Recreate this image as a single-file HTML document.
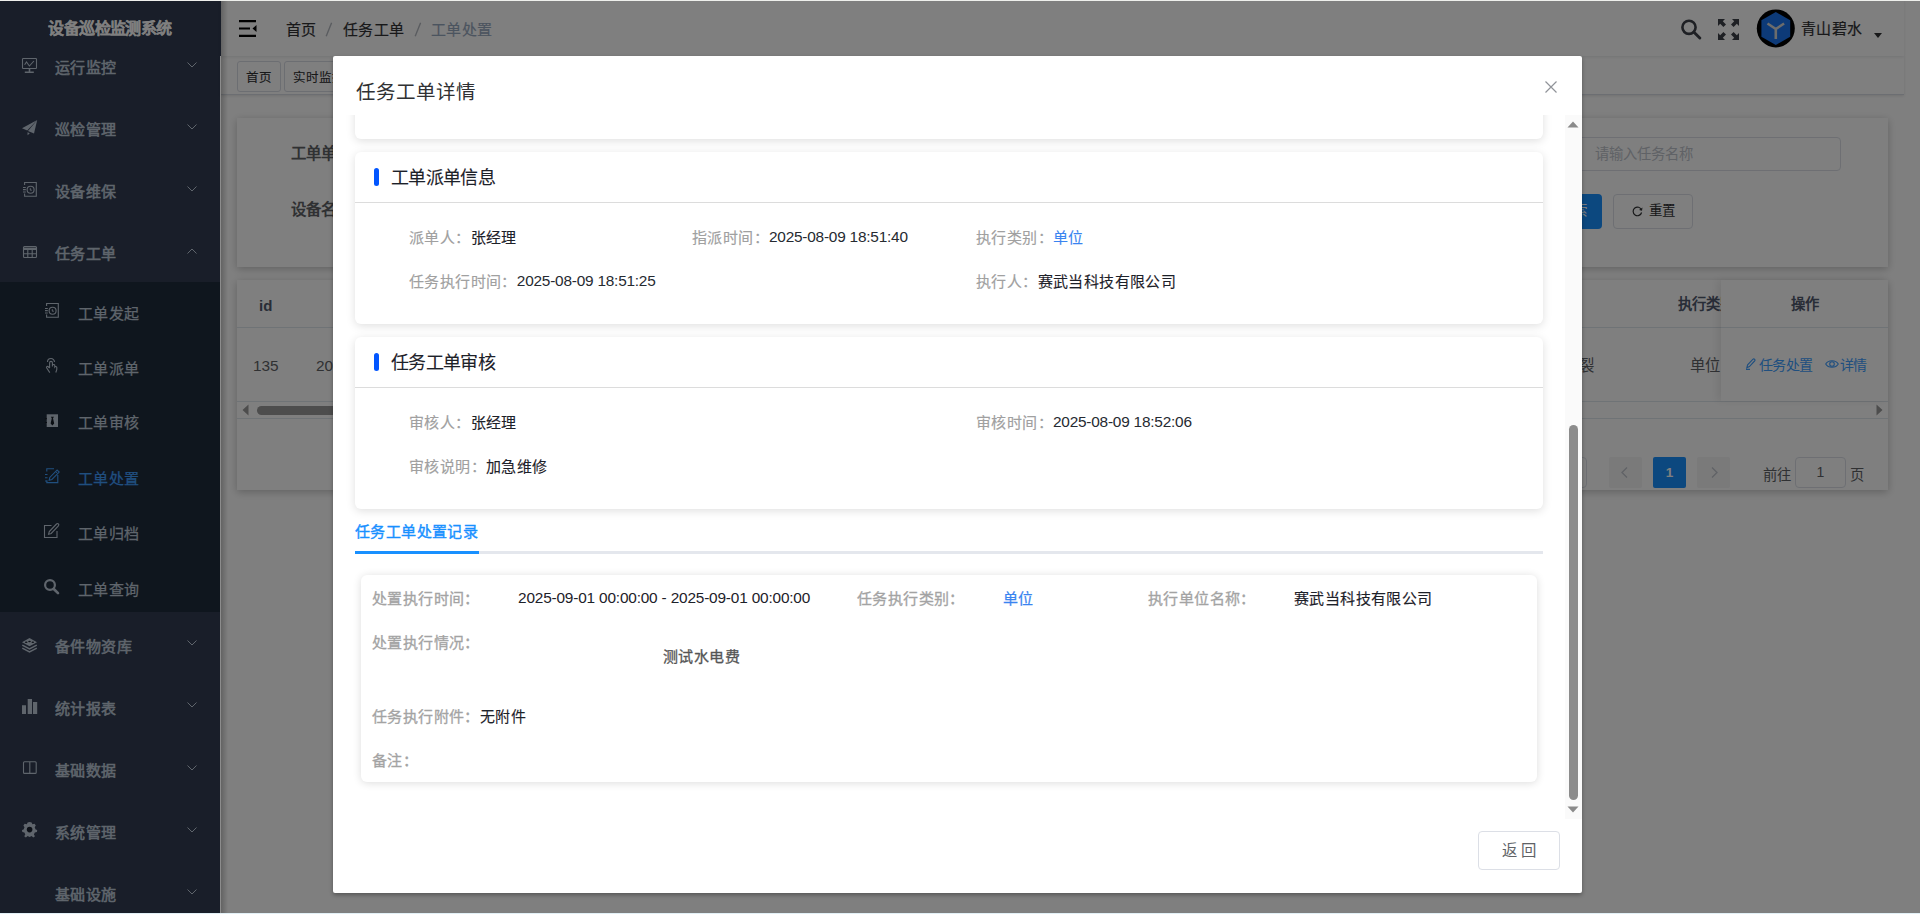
<!DOCTYPE html>
<html lang="zh-CN"><head><meta charset="utf-8">
<style>
*{box-sizing:border-box;margin:0;padding:0}
html,body{width:1920px;height:914px;overflow:hidden}
body{position:relative;font-family:"Liberation Sans",sans-serif;background:#eef0ee;color:#303133}
.abs{position:absolute;white-space:nowrap}
#app{position:absolute;z-index:0;left:0;top:0;width:1920px;height:914px;background:#fff;overflow:hidden}
/* sidebar */
#side{position:absolute;left:0;top:0;width:220px;height:914px;background:#323c52}
.mt{font-size:15px;letter-spacing:0.4px;line-height:22px;color:#bfcbd9;-webkit-text-stroke:0.55px #bfcbd9}
.st{font-size:15px;letter-spacing:0.4px;line-height:22px;color:#bfcbd9;-webkit-text-stroke:0.25px #bfcbd9}
.st.act{color:#409eff;-webkit-text-stroke:0.25px #409eff}
#side .t{position:absolute;left:0;width:220px;text-align:center;color:#fff;font-weight:bold;font-size:15.4px;line-height:20px}
.mi{position:absolute;left:0;width:220px;height:62px}
.mi .tx{position:absolute;left:55px;top:0;line-height:62px;font-size:15.4px;font-weight:bold;color:#fdfdfd;opacity:.5}
.mi svg.ic{position:absolute;left:21px}
.mi .ch{position:absolute;left:187px;top:28px;width:10px;height:6px}
#sub{position:absolute;left:0;top:282px;width:220px;height:330px;background:#1f2c3c}
.si{position:absolute;left:0;width:220px;height:55px}
.si .tx{position:absolute;left:78px;top:0;line-height:55px;font-size:15.4px;color:#fdfdfd;opacity:.5}
.si svg{position:absolute;left:45px}
/* header */
#hdr{position:absolute;left:221px;top:0;width:1683px;height:56px;background:#fff;box-shadow:0 1px 3px rgba(0,21,41,.1);z-index:2}
.bc{font-size:15px;letter-spacing:0.4px;line-height:22px;color:#303133;-webkit-text-stroke:0.2px currentColor}
.bc.sep{color:#b8bcc4;font-size:16px;letter-spacing:0;font-weight:bold;-webkit-text-stroke:0}
#tags{position:absolute;left:221px;top:56px;width:1683px;height:39px;background:#fff;border-bottom:1px solid #d8dce5;box-shadow:0 1px 3px rgba(0,0,0,.12)}
.tag{position:absolute;top:5px;height:31px;padding-top:2px !important;border:1px solid #d8dce5;border-radius:3px;font-size:12.5px;line-height:29px;color:#303133;padding:0 8px;background:#fff;-webkit-text-stroke:0.1px #303133}
.card{position:absolute;background:#fff;box-shadow:0 2px 8px rgba(0,0,0,.24)}
.flb{font-size:15.4px;font-weight:bold;color:#606266;line-height:20px}
.th{font-size:14.3px;font-weight:bold;color:#515a6e;line-height:20px}
.td{font-size:15.4px;color:#606266;line-height:22px}
.lk{font-size:14px;letter-spacing:-0.5px;color:#409eff;line-height:22px}
.pg{position:absolute;width:33px;height:31px;background:#f4f4f5;border-radius:2px}
#ov{position:absolute;left:0;top:0;width:1920px;height:914px;background:rgba(0,0,0,.5)}
/* modal */
#modal{position:absolute;left:333px;top:56px;width:1249px;height:837px;background:#fff;border-radius:2px;box-shadow:0 2px 4px rgba(0,0,0,.32)}
#mtitle{position:absolute;left:23px;top:22px;font-size:19.5px;line-height:28px;color:#303133}
#scroll{position:absolute;left:0;top:59px;width:1249px;height:704px;overflow:hidden}
.mc{position:absolute;left:22px;width:1188px;background:#fff;border-radius:6px;box-shadow:0 2px 10px rgba(0,0,0,.13)}
.mc .hd{position:absolute;left:0;top:0;width:100%;height:51px;border-bottom:1px solid #dcdcdc}
.mc .bar{position:absolute;left:19px;top:16px;width:5px;height:18px;border-radius:2.5px;background:#0256ff}
.mc .ht{position:absolute;left:36px;top:13px;font-size:18px;letter-spacing:-0.7px;line-height:26px;color:#1d2129;-webkit-text-stroke:0.1px #1d2129}
.lb{position:absolute;font-size:15px;letter-spacing:0.4px;line-height:22px;color:#a0a0a0;white-space:nowrap;-webkit-text-stroke:0.15px currentColor}
.vl{position:absolute;font-size:15px;letter-spacing:0.4px;line-height:22px;color:#1d2129;white-space:nowrap}
.blue{color:#3a84f0}
.vl0{color:#1d2129;-webkit-text-stroke:0.12px #1d2129}
.vl0.blue{color:#3a84f0;-webkit-text-stroke:0.1px #3a84f0}
.num{-webkit-text-stroke:0 !important;color:#262a31 !important}
.num{font-size:15.4px;letter-spacing:-0.22px;position:relative;top:-1px}
</style></head><body>
<div id="app">
 <div id="side">
  <div class="abs" style="left:0;top:18px;width:220px;text-align:center;color:#fff;font-weight:bold;font-size:16px;letter-spacing:-0.6px;line-height:22px;-webkit-text-stroke:0.1px #fff">设备巡检监测系统</div>
  <div id="sub"></div>

  <svg class="abs" style="left:0;top:0;overflow:visible" width="220" height="914" fill="none" stroke="#bfcbd9" stroke-width="1.1">
   <rect x="22.5" y="58.5" width="14" height="10" rx="0.8"/>
   <path d="M29.5 68.5V71.5M24.8 72.3H33.8" stroke-width="1.6"/>
   <path d="M24.6 64.8 L26.5 62 L29.4 66 L33.9 61"/>
   <path d="M37.2 120 L22 128.3 L27.2 130.5 Z" fill="#bfcbd9" stroke="none"/>
   <path d="M37.2 120 L28 131 L34 133.5 Z" fill="#bfcbd9" stroke="none"/>
   <path d="M27.5 132.2 L29.8 133.2 L27.6 135.2 Z" fill="#bfcbd9" stroke="none"/>
   <path d="M24.6 185V182.5H36.3V196.3H24.6V193.5 M23 187.5H25.8M23 189.6H25.8M23 192H25.8"/>
   <circle cx="30.6" cy="189.8" r="3.5"/><path d="M30.3 188.2V190.2H31.8" stroke-width="1"/>
   <rect x="23.5" y="246.5" width="13" height="11" rx="1"/>
   <path d="M23.5 248.8H36.5" stroke-width="2.4"/>
   <path d="M27.8 250V257.5M32.2 250V257.5M23.5 253.8H36.5"/>
  </svg>
  <svg class="abs" style="left:0;top:0;overflow:visible" width="220" height="914" fill="none" stroke="#bfcbd9" stroke-width="1.1">
   <path d="M46.6 306V303.5H58.3V317.3H46.6V314.5 M45 308.5H47.8M45 310.6H47.8M45 313H47.8"/>
   <circle cx="52.6" cy="310.8" r="3.5"/><path d="M52.3 309.2V311.2H53.8" stroke-width="1"/>
   <path d="M47.5 362 A3.5 3.5 0 0 1 54.5 362" />
   <path d="M49.6 368V362.8A1.4 1.4 0 0 1 52.4 362.8V366.5 M52.4 365.5 A1.2 1.2 0 0 1 54.8 365.8V367 A1.1 1.1 0 0 1 56.8 367.4V369.5 L55.8 372.5 M49.6 368 L48 366.5 A1 1 0 0 0 46.6 367.8 L49.8 372.6"/>
   <rect x="46.7" y="414.3" width="11.3" height="12.7" fill="#bfcbd9" stroke="none"/>
   <path d="M44.8 418.7H47M44.8 422.5H47" stroke="#151c26" stroke-width="1"/>
   <path d="M50.8 416.8H54L53 418.3L54.2 423.5L52.4 425.5L50.6 423.5L51.8 418.3Z" fill="#151c26" stroke="none"/>
   <path d="M46.8 471.5V468.8H54 M46.8 480.5V482.6H57.8V475" stroke="#409eff"/>
   <path d="M45 474.5H47.5M45 477.8H47.5M45 481H47.5" stroke="#409eff"/>
   <path d="M49.2 480.2 L49.8 477.4 L57.1 470 L59.2 472.1 L51.9 479.5 Z" stroke="#409eff" stroke-width="1.1"/><path d="M55.6 471.5 L57.7 473.6" stroke="#409eff" stroke-width="1"/>
   <path d="M51.5 525.5H44.5V537.5H57V531"/>
   <path d="M48.6 534.2 L49.3 531.5 L56.5 524 A1.3 1.3 0 0 1 58.4 525.9 L51.2 533.5 Z"/>
   <circle cx="50" cy="585" r="4.9" stroke-width="2.2"/>
   <path d="M53.8 589 L58 593.2" stroke-width="2.6" stroke-linecap="round"/>
   <path d="M29.5 638 L37 642.2 L29.5 646.2 L22 642.2 Z" fill="#bfcbd9" stroke="none"/>
   <path d="M22.3 645.2 L29.5 649 L36.8 645.2 M22.3 648.2 L29.5 651.8 L36.8 648.2" stroke-width="1.5"/>
   <ellipse cx="29.5" cy="641.5" rx="1.3" ry="0.8" fill="#1b2230" stroke="none"/>
   <ellipse cx="26.2" cy="642.2" rx="1.3" ry="0.7" fill="#1b2230" stroke="none"/>
   <ellipse cx="32.8" cy="642.2" rx="1.3" ry="0.7" fill="#1b2230" stroke="none"/>
   <path d="M22 705.3H26V714H22Z M27.7 699H32V714H27.7Z M33 702H37.2V714H33Z" fill="#bfcbd9" stroke="none"/>
   <rect x="23.5" y="761.7" width="12.7" height="11.7" rx="1"/>
   <path d="M29.8 762V773"/>
   <path d="M29.6 822 L31.6 822.4 L32.4 824.3 L34.5 823.8 L35.8 825.4 L34.7 827.3 L35.6 829.5 L37.2 830 L36.9 832 L34.8 832.4 L33.9 834.5 L35 836.3 L33.3 837.4 L31.6 836.1 L29.6 836.9 L27.6 836.1 L25.9 837.4 L24.2 836.3 L25.3 834.5 L24.4 832.4 L22.3 832 L22 830 L23.6 829.5 L24.5 827.3 L23.4 825.4 L24.7 823.8 L26.8 824.3 L27.6 822.4 Z" fill="#bfcbd9" stroke="none"/>
   <circle cx="29.6" cy="829.6" r="2.8" fill="#1b2230" stroke="none"/>
  </svg>
  <div class="abs mt" style="left:55px;top:57.3px">运行监控</div>
  <svg class="abs" style="left:187px;top:61.8px" width="10" height="6"><path d="M0.5 0.5 L5 5 L9.5 0.5" fill="none" stroke="#bfcbd9" stroke-width="1"/></svg>
  <div class="abs mt" style="left:55px;top:119.0px">巡检管理</div>
  <svg class="abs" style="left:187px;top:123.5px" width="10" height="6"><path d="M0.5 0.5 L5 5 L9.5 0.5" fill="none" stroke="#bfcbd9" stroke-width="1"/></svg>
  <div class="abs mt" style="left:55px;top:181.0px">设备维保</div>
  <svg class="abs" style="left:187px;top:185.5px" width="10" height="6"><path d="M0.5 0.5 L5 5 L9.5 0.5" fill="none" stroke="#bfcbd9" stroke-width="1"/></svg>
  <div class="abs mt" style="left:55px;top:243.2px">任务工单</div>
  <svg class="abs" style="left:187px;top:247.7px" width="10" height="6"><path d="M0.5 5.5 L5 1 L9.5 5.5" fill="none" stroke="#bfcbd9" stroke-width="1"/></svg>
  <div class="abs mt" style="left:55px;top:635.9px">备件物资库</div>
  <svg class="abs" style="left:187px;top:640.4px" width="10" height="6"><path d="M0.5 0.5 L5 5 L9.5 0.5" fill="none" stroke="#bfcbd9" stroke-width="1"/></svg>
  <div class="abs mt" style="left:55px;top:697.9px">统计报表</div>
  <svg class="abs" style="left:187px;top:702.4px" width="10" height="6"><path d="M0.5 0.5 L5 5 L9.5 0.5" fill="none" stroke="#bfcbd9" stroke-width="1"/></svg>
  <div class="abs mt" style="left:55px;top:760.3px">基础数据</div>
  <svg class="abs" style="left:187px;top:764.8px" width="10" height="6"><path d="M0.5 0.5 L5 5 L9.5 0.5" fill="none" stroke="#bfcbd9" stroke-width="1"/></svg>
  <div class="abs mt" style="left:55px;top:822.3px">系统管理</div>
  <svg class="abs" style="left:187px;top:826.8px" width="10" height="6"><path d="M0.5 0.5 L5 5 L9.5 0.5" fill="none" stroke="#bfcbd9" stroke-width="1"/></svg>
  <div class="abs mt" style="left:55px;top:884.3px">基础设施</div>
  <svg class="abs" style="left:187px;top:888.8px" width="10" height="6"><path d="M0.5 0.5 L5 5 L9.5 0.5" fill="none" stroke="#bfcbd9" stroke-width="1"/></svg>
  <div class="abs st" style="left:78px;top:302.6px">工单发起</div>
  <div class="abs st" style="left:78px;top:357.7px">工单派单</div>
  <div class="abs st" style="left:78px;top:412.1px">工单审核</div>
  <div class="abs st act" style="left:78px;top:467.6px">工单处置</div>
  <div class="abs st" style="left:78px;top:522.7px">工单归档</div>
  <div class="abs st" style="left:78px;top:578.7px">工单查询</div>
 </div>
 <div id="hdr">
  <svg class="abs" style="left:18px;top:20px" width="19" height="17" viewBox="0 0 19 17"><path d="M0 1.2H17M0 8.5H11M0 15.8H17" stroke="#000" stroke-width="2.2"/><path d="M17.5 5 L13.5 8.5 L17.5 12 Z" fill="#000"/></svg>
  <div class="abs bc" style="left:65px;top:19px">首页</div>
  <svg class="abs" style="left:104px;top:22px" width="8" height="15"><path d="M1.2 14.2 L6.6 0.8" stroke="#b4b8c0" stroke-width="1.4"/></svg>
  <div class="abs bc" style="left:122px;top:19px">任务工单</div>
  <svg class="abs" style="left:192.5px;top:22px" width="8" height="15"><path d="M1.2 14.2 L6.6 0.8" stroke="#b4b8c0" stroke-width="1.4"/></svg>
  <div class="abs bc" style="left:210px;top:19px;color:#97a8be">工单处置</div>
  <svg class="abs" style="left:1460px;top:19px" width="21" height="21" viewBox="0 0 21 21"><circle cx="8" cy="8.3" r="6.6" fill="none" stroke="#3d4048" stroke-width="2.6"/><path d="M13 13.3 L18.8 19" stroke="#3d4048" stroke-width="2.9" stroke-linecap="round"/></svg>
  <svg class="abs" style="left:1497px;top:19px" width="21" height="21" viewBox="0 0 21 21" fill="#3d4048"><path d="M0 0H7L4.8 2.2 8 5.4 5.4 8 2.2 4.8 0 7Z"/><path d="M21 0V7L18.8 4.8 15.6 8 13 5.4 16.2 2.2 14 0Z"/><path d="M0 21V14L2.2 16.2 5.4 13 8 15.6 4.8 18.8 7 21Z"/><path d="M21 21H14L16.2 18.8 13 15.6 15.6 13 18.8 16.2 21 14Z"/></svg>
  <svg class="abs" style="left:1535px;top:9px" width="40" height="40" viewBox="0 0 40 40"><circle cx="19.8" cy="19.4" r="19" fill="#000"/><path d="M19.8 3 L34.2 11.3 V27.7 L19.8 36 L5.4 27.7 V11.3 Z" fill="#1a74f0"/><path d="M11.5 14.5 L19.8 20 L28.1 14.5 M19.8 20 V30" fill="none" stroke="#d8d8d8" stroke-width="2.6"/></svg>
  <div class="abs" style="left:1580px;top:18px;font-size:15px;letter-spacing:0.4px;line-height:22px;color:#303133;-webkit-text-stroke:0.2px #303133">青山碧水</div>
  <svg class="abs" style="left:1653px;top:33px" width="8" height="5"><path d="M0 0H8L4 5Z" fill="#303133"/></svg>
 </div>

 <div class="card" style="left:237px;top:118px;width:1651px;height:149px">
  <div class="abs flb" style="left:54px;top:26px">工单单号</div>
  <div class="abs flb" style="left:54px;top:82px">设备名称</div>
  <div class="abs" style="left:1300px;top:19px;width:304px;height:34px;border:1px solid #dcdfe6;border-radius:4px"></div>
  <div class="abs" style="left:1358px;top:26px;font-size:14.3px;line-height:20px;color:#c0c4cc">请输入任务名称</div>
  <div class="abs" style="left:1290px;top:76px;width:75px;height:35px;border-radius:4px;background:#1890ff;overflow:hidden"><div class="abs" style="left:34px;top:7px;font-size:13.5px;line-height:20px;color:#fff;font-weight:500">搜索</div></div>
  <div class="abs" style="left:1376px;top:76px;width:80px;height:35px;border:1px solid #dcdfe6;border-radius:4px"></div>
  <svg class="abs" style="left:1395px;top:88px" width="11" height="11" viewBox="0 0 11 11"><path d="M9.5 4 A4.3 4.3 0 1 0 9.6 6.5" fill="none" stroke="#303133" stroke-width="1.2"/><path d="M10.5 1.5 L10 4.8 L7 4 Z" fill="#303133"/></svg>
  <div class="abs" style="left:1412px;top:83px;font-size:13.5px;line-height:20px;color:#303133;font-weight:500">重置</div>
 </div>
 <div class="card" style="left:237px;top:280px;width:1651px;height:210px">
  <div class="abs" style="left:0;top:47px;width:1651px;height:1px;background:#dfe6ec"></div>
  <div class="abs th" style="left:22px;top:16px;font-size:15px">id</div>
  <div class="abs th" style="left:1441px;top:14px">执行类别</div>
  <div class="abs td" style="left:16px;top:75px">135</div>
  <div class="abs td" style="left:79px;top:75px">2025</div>
  <div class="abs td" style="left:1327px;top:75px">断裂</div>
  <div class="abs td" style="left:1453px;top:75px">单位</div>
  <div class="abs" style="left:0;top:121px;width:1651px;height:1px;background:#dfe6ec"></div>
  <div class="abs" style="left:0;top:138px;width:1651px;height:1px;background:#dfe6ec"></div>
  <svg class="abs" style="left:5px;top:124px" width="7" height="12"><path d="M6.5 0.5 V11.5 L0.5 6Z" fill="#9a9a9a"/></svg>
  <div class="abs" style="left:20px;top:126px;width:400px;height:9px;border-radius:4.5px;background:#9a9a9a"></div>
  <svg class="abs" style="left:1639px;top:124px" width="7" height="12"><path d="M0.5 0.5 V11.5 L6.5 6Z" fill="#9a9a9a"/></svg>
  <div class="abs" style="left:1484px;top:0;width:167px;height:121px;background:#fff;box-shadow:-4px 0 8px rgba(0,0,0,.08)">
   <div class="abs" style="left:0;top:47px;width:167px;height:1px;background:#dfe6ec"></div>
   <div class="abs th" style="left:70px;top:14px">操作</div>
   <svg class="abs" style="left:24px;top:78px" width="11" height="12" viewBox="0 0 11 12"><path d="M1.8 9.8 L2.6 6.8 L7.8 1.3 A1 1 0 0 1 9.6 3 L4.4 8.6 Z M1 11.4 H5" fill="none" stroke="#409eff" stroke-width="1.1"/></svg>
   <div class="abs lk" style="left:37.5px;top:74px">任务处置</div>
   <svg class="abs" style="left:103.5px;top:79px" width="14" height="10" viewBox="0 0 14 10"><path d="M0.7 5 C3.2 0.6 10.8 0.6 13.3 5 C10.8 9.4 3.2 9.4 0.7 5Z" fill="none" stroke="#409eff" stroke-width="1.1"/><circle cx="7" cy="5" r="2.3" fill="none" stroke="#409eff" stroke-width="1.1"/></svg>
   <div class="abs lk" style="left:118.5px;top:74px">详情</div>
  </div>
  <div class="abs pg" style="left:1372px;top:177px"><svg style="position:absolute;left:12px;top:10px" width="7" height="11"><path d="M6 0.5 L1 5.5 L6 10.5" fill="none" stroke="#c0c4cc" stroke-width="1.3"/></svg></div>
  <div class="abs pg" style="left:1416px;top:177px;background:#1890ff;color:#fff;font-weight:bold;text-align:center;line-height:31px;font-size:13.5px">1</div>
  <div class="abs pg" style="left:1460px;top:177px"><svg style="position:absolute;left:14px;top:10px" width="7" height="11"><path d="M1 0.5 L6 5.5 L1 10.5" fill="none" stroke="#c0c4cc" stroke-width="1.3"/></svg></div>
  <div class="abs" style="left:1300px;top:177px;width:50px;height:31px;border:1px solid #dcdfe6;border-radius:4px"></div>
  <div class="abs td" style="left:1526px;top:184px;font-size:14.3px">前往</div>
  <div class="abs" style="left:1558px;top:177px;width:51px;height:31px;border:1px solid #dcdfe6;border-radius:4px;text-align:center;font-size:14px;line-height:29px;color:#606266">1</div>
  <div class="abs td" style="left:1613px;top:184px;font-size:14.3px">页</div>
 </div>
 <div id="tags">
  <div class="tag" style="left:16px">首页</div>
  <div class="tag" style="left:63px">实时监控</div>
 </div>
</div>
<div id="ov"></div>
<div class="abs" style="left:220px;top:0;width:1px;height:56px;background:#191e29"></div>
<div class="abs" style="left:220px;top:56px;width:1px;height:857px;background:#8c8c8c"></div>
<div class="abs" style="left:221px;top:1px;width:7px;height:912px;background:linear-gradient(to right,rgba(0,0,0,.22),rgba(0,0,0,0))"></div>
<div id="modal">
 <div id="mtitle">任务工单详情</div>
 <div id="scroll">
  <div class="mc" style="top:-150px;height:174px"></div>
  <div class="mc" style="top:37px;height:172px">
   <div class="hd"><div class="bar"></div><div class="ht">工单派单信息</div></div>
   <div class="lb" style="left:54px;top:75px">派单人：<span class="vl0">张经理</span></div>
   <div class="lb" style="left:337px;top:75px">指派时间：<span class="vl0 num">2025-08-09 18:51:40</span></div>
   <div class="lb" style="left:621px;top:75px">执行类别：<span class="vl0 blue">单位</span></div>
   <div class="lb" style="left:54px;top:119px">任务执行时间：<span class="vl0 num">2025-08-09 18:51:25</span></div>
   <div class="lb" style="left:621px;top:119px">执行人：<span class="vl0">赛武当科技有限公司</span></div>
  </div>
  <div class="mc" style="top:222px;height:172px">
   <div class="hd"><div class="bar"></div><div class="ht">任务工单审核</div></div>
   <div class="lb" style="left:54px;top:75px">审核人：<span class="vl0">张经理</span></div>
   <div class="lb" style="left:621px;top:75px">审核时间：<span class="vl0 num">2025-08-09 18:52:06</span></div>
   <div class="lb" style="left:54px;top:119px">审核说明：<span class="vl0">加急维修</span></div>
  </div>
  <div id="tab" class="abs" style="left:22px;top:405px;font-size:15px;letter-spacing:0.4px;line-height:24px;color:#1890ff;-webkit-text-stroke:0.4px #1890ff">任务工单处置记录</div>
  <div class="abs" style="left:22px;top:436px;width:1188px;height:3px;background:#e4e7ed"></div>
  <div class="abs" style="left:22px;top:436px;width:124px;height:3px;background:#1890ff"></div>
  <div class="mc" style="left:28px;top:460px;width:1176px;height:207px;box-shadow:0 1px 8px rgba(0,0,0,.14)">
   <div class="lb" style="left:11px;top:13px;color:#a3a3a3;-webkit-text-stroke:0.3px #a3a3a3">处置执行时间：</div>
   <div class="vl" style="left:157px;top:12px;font-size:15.4px;letter-spacing:-0.18px">2025-09-01 00:00:00 - 2025-09-01 00:00:00</div>
   <div class="lb" style="left:496px;top:13px;color:#a3a3a3;-webkit-text-stroke:0.3px #a3a3a3">任务执行类别：</div>
   <div class="vl blue" style="left:642px;top:13px;-webkit-text-stroke:0.25px #3a84f0">单位</div>
   <div class="lb" style="left:787px;top:13px;color:#a3a3a3;-webkit-text-stroke:0.3px #a3a3a3">执行单位名称：</div>
   <div class="vl" style="left:933px;top:13px;-webkit-text-stroke:0.15px #1d2129">赛武当科技有限公司</div>
   <div class="lb" style="left:11px;top:57px;color:#a3a3a3;-webkit-text-stroke:0.3px #a3a3a3">处置执行情况：</div>
   <div class="vl" style="left:302px;top:71px;color:#555;-webkit-text-stroke:0.3px #555">测试水电费</div>
   <div class="lb" style="left:11px;top:131px;color:#a3a3a3;-webkit-text-stroke:0.3px #a3a3a3">任务执行附件：<span class="vl0">无附件</span></div>
   <div class="lb" style="left:11px;top:175px;color:#a3a3a3;-webkit-text-stroke:0.3px #a3a3a3">备注：</div>
  </div>
  <div id="sb" class="abs" style="left:1232px;top:0;width:17px;height:704px;background:#fafafa">
   <svg class="abs" style="left:2px;top:6px" width="12" height="7"><path d="M0.5 6.5 L6 0.5 L11.5 6.5 Z" fill="#8a8a8a"/></svg>
   <div class="abs" style="left:4px;top:310px;width:9px;height:375px;border-radius:4.5px;background:#8c8c8c"></div>
   <svg class="abs" style="left:2px;top:691px" width="12" height="7"><path d="M0.5 0.5 L6 6.5 L11.5 0.5 Z" fill="#8a8a8a"/></svg>
  </div>
 </div>
 <svg class="abs" style="left:1212px;top:25px" width="12" height="12"><path d="M0.5 0.5 L11.5 11.5 M11.5 0.5 L0.5 11.5" stroke="#909399" stroke-width="1.2"/></svg>
 <div class="abs" style="left:1145px;top:775px;width:82px;height:39px;border:1px solid #dcdfe6;border-radius:4px;font-size:15.4px;line-height:37px;text-align:center;color:#606266">返 回</div>
</div>
<div class="abs" style="left:0;top:0;width:1920px;height:1px;background:#eeefec"></div>
<div class="abs" style="left:0;top:913px;width:1920px;height:1px;background:#e2f0f6"></div>
</body></html>
